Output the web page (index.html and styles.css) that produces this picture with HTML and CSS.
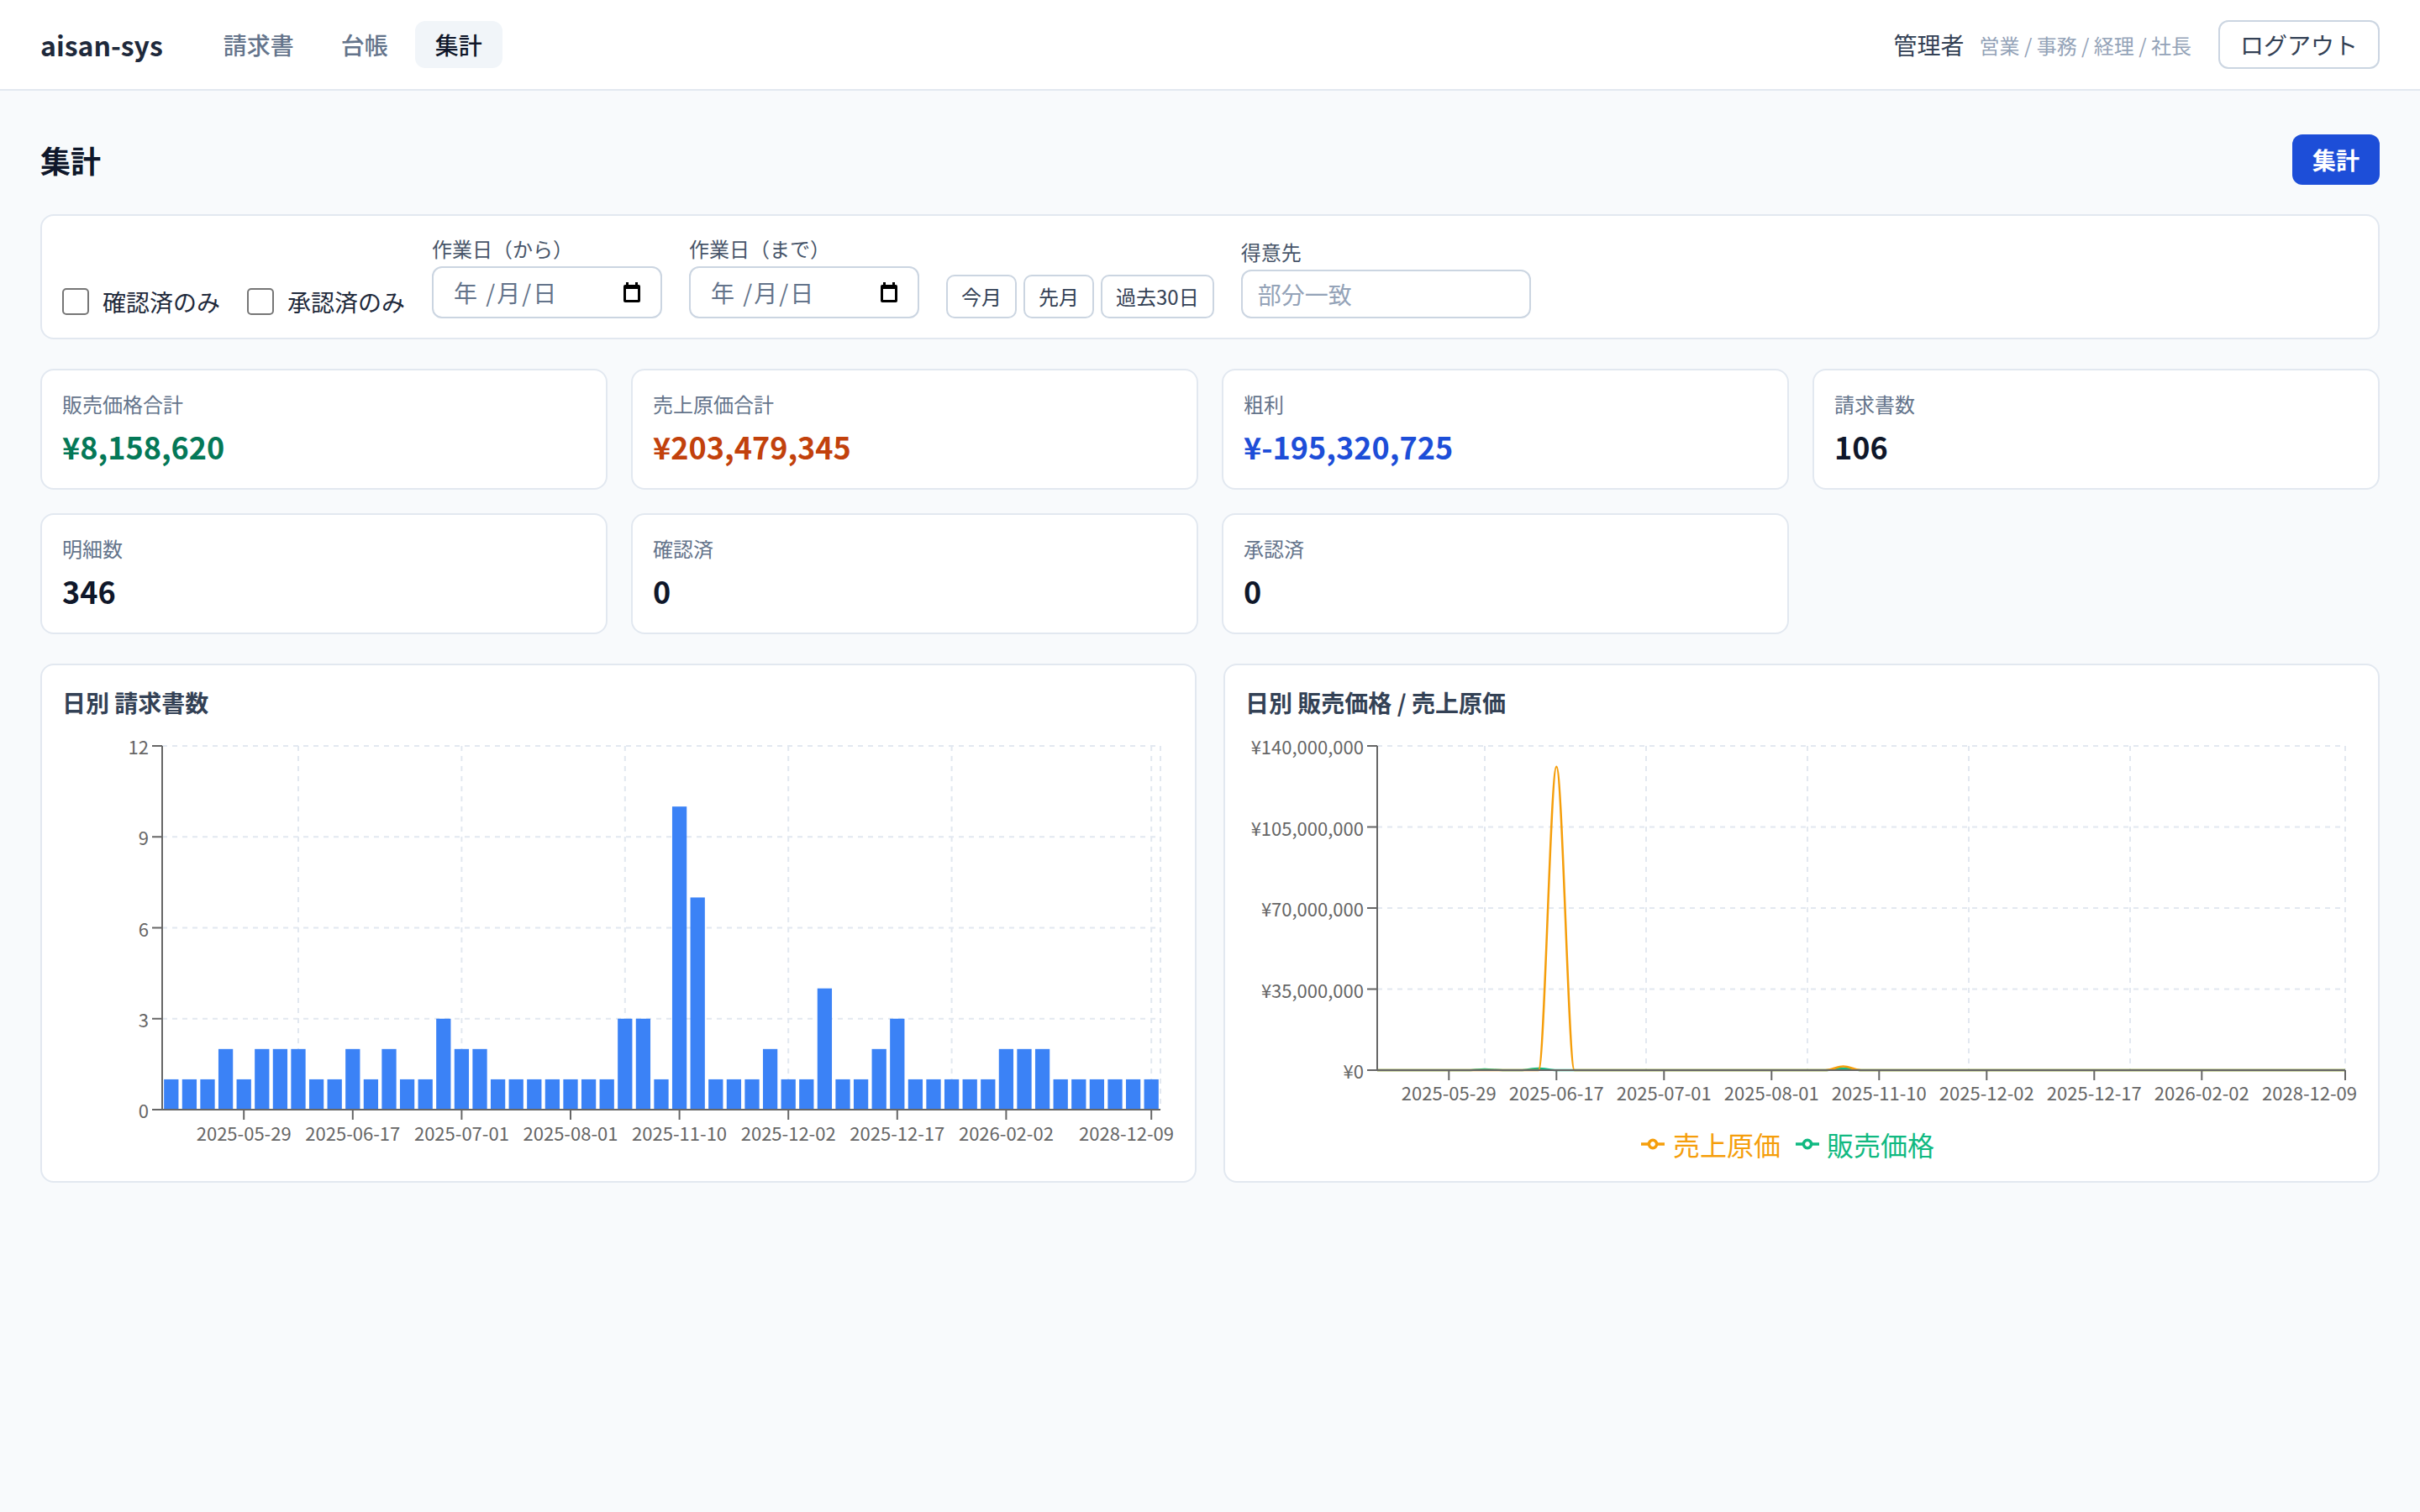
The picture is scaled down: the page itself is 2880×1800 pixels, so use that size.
FILE: index.html
```html
<!DOCTYPE html>
<html lang="ja">
<head>
<meta charset="utf-8">
<title>aisan-sys 集計</title>
<link rel="stylesheet" href="styles.css">
</head>
<body>
<header class="topbar">
  <div class="brand-nav">
    <div class="brand">aisan-sys</div>
    <nav class="nav">
      <a class="nav-item">請求書</a>
      <a class="nav-item">台帳</a>
      <a class="nav-item active">集計</a>
    </nav>
  </div>
  <div class="user">
    <span class="user-name">管理者</span>
    <span class="user-roles">営業 / 事務 / 経理 / 社長</span>
    <button class="btn-outline">ログアウト</button>
  </div>
</header>

<main class="main">
  <div class="page-head">
    <h1 class="page-title">集計</h1>
    <button class="btn-primary">集計</button>
  </div>

  <section class="card filters">
    <label class="check"><input type="checkbox" class="checkbox"><span>確認済のみ</span></label>
    <label class="check"><input type="checkbox" class="checkbox"><span>承認済のみ</span></label>
    <div class="field">
      <div class="field-label">作業日（から）</div>
      <div class="date-input"><span class="date-ph">年 /月/日</span>
        <svg class="cal" viewBox="0 0 20 24" width="20" height="24"><rect x="3" y="0" width="3" height="4" fill="#000"/><rect x="14" y="0" width="3" height="4" fill="#000"/><rect x="0" y="3" width="20" height="21" rx="2" fill="#000"/><rect x="3" y="8" width="14" height="13" fill="#fff"/></svg>
      </div>
    </div>
    <div class="field">
      <div class="field-label">作業日（まで）</div>
      <div class="date-input"><span class="date-ph">年 /月/日</span>
        <svg class="cal" viewBox="0 0 20 24" width="20" height="24"><rect x="3" y="0" width="3" height="4" fill="#000"/><rect x="14" y="0" width="3" height="4" fill="#000"/><rect x="0" y="3" width="20" height="21" rx="2" fill="#000"/><rect x="3" y="8" width="14" height="13" fill="#fff"/></svg>
      </div>
    </div>
    <div class="quick">
      <button class="btn-small">今月</button>
      <button class="btn-small">先月</button>
      <button class="btn-small">過去30日</button>
    </div>
    <div class="field">
      <div class="field-label">得意先</div>
      <input class="text-input" type="text" placeholder="部分一致">
    </div>
  </section>

  <section class="stats">
    <div class="card stat"><div class="stat-label">販売価格合計</div><div class="stat-value green">¥8,158,620</div></div>
    <div class="card stat"><div class="stat-label">売上原価合計</div><div class="stat-value orange">¥203,479,345</div></div>
    <div class="card stat"><div class="stat-label">粗利</div><div class="stat-value blue">¥-195,320,725</div></div>
    <div class="card stat"><div class="stat-label">請求書数</div><div class="stat-value">106</div></div>
    <div class="card stat"><div class="stat-label">明細数</div><div class="stat-value">346</div></div>
    <div class="card stat"><div class="stat-label">確認済</div><div class="stat-value">0</div></div>
    <div class="card stat"><div class="stat-label">承認済</div><div class="stat-value">0</div></div>
  </section>

  <section class="charts">
    <div class="card chart-card">
      <h2 class="chart-title">日別 請求書数</h2>
      <svg class="chart" width="1323" height="516" viewBox="0 0 1323 516">
        <g class="grid">
          <line x1="119" y1="16" x2="1307" y2="16"/>
          <line x1="119" y1="124.25" x2="1307" y2="124.25"/>
          <line x1="119" y1="232.5" x2="1307" y2="232.5"/>
          <line x1="119" y1="340.75" x2="1307" y2="340.75"/>
          <line x1="281" y1="16" x2="281" y2="449"/>
          <line x1="475.4" y1="16" x2="475.4" y2="449"/>
          <line x1="669.8" y1="16" x2="669.8" y2="449"/>
          <line x1="864.2" y1="16" x2="864.2" y2="449"/>
          <line x1="1058.6" y1="16" x2="1058.6" y2="449"/>
          <line x1="1296.2" y1="16" x2="1296.2" y2="449"/>
          <line x1="1307" y1="16" x2="1307" y2="449"/>
        </g>
        <g class="bars">
          <rect x="121.16" y="412.92" width="17.28" height="36.08"/>
          <rect x="142.76" y="412.92" width="17.28" height="36.08"/>
          <rect x="164.36" y="412.92" width="17.28" height="36.08"/>
          <rect x="185.96" y="376.83" width="17.28" height="72.17"/>
          <rect x="207.56" y="412.92" width="17.28" height="36.08"/>
          <rect x="229.16" y="376.83" width="17.28" height="72.17"/>
          <rect x="250.76" y="376.83" width="17.28" height="72.17"/>
          <rect x="272.36" y="376.83" width="17.28" height="72.17"/>
          <rect x="293.96" y="412.92" width="17.28" height="36.08"/>
          <rect x="315.56" y="412.92" width="17.28" height="36.08"/>
          <rect x="337.16" y="376.83" width="17.28" height="72.17"/>
          <rect x="358.76" y="412.92" width="17.28" height="36.08"/>
          <rect x="380.36" y="376.83" width="17.28" height="72.17"/>
          <rect x="401.96" y="412.92" width="17.28" height="36.08"/>
          <rect x="423.56" y="412.92" width="17.28" height="36.08"/>
          <rect x="445.16" y="340.75" width="17.28" height="108.25"/>
          <rect x="466.76" y="376.83" width="17.28" height="72.17"/>
          <rect x="488.36" y="376.83" width="17.28" height="72.17"/>
          <rect x="509.96" y="412.92" width="17.28" height="36.08"/>
          <rect x="531.56" y="412.92" width="17.28" height="36.08"/>
          <rect x="553.16" y="412.92" width="17.28" height="36.08"/>
          <rect x="574.76" y="412.92" width="17.28" height="36.08"/>
          <rect x="596.36" y="412.92" width="17.28" height="36.08"/>
          <rect x="617.96" y="412.92" width="17.28" height="36.08"/>
          <rect x="639.56" y="412.92" width="17.28" height="36.08"/>
          <rect x="661.16" y="340.75" width="17.28" height="108.25"/>
          <rect x="682.76" y="340.75" width="17.28" height="108.25"/>
          <rect x="704.36" y="412.92" width="17.28" height="36.08"/>
          <rect x="725.96" y="88.17" width="17.28" height="360.83"/>
          <rect x="747.56" y="196.42" width="17.28" height="252.58"/>
          <rect x="769.16" y="412.92" width="17.28" height="36.08"/>
          <rect x="790.76" y="412.92" width="17.28" height="36.08"/>
          <rect x="812.36" y="412.92" width="17.28" height="36.08"/>
          <rect x="833.96" y="376.83" width="17.28" height="72.17"/>
          <rect x="855.56" y="412.92" width="17.28" height="36.08"/>
          <rect x="877.16" y="412.92" width="17.28" height="36.08"/>
          <rect x="898.76" y="304.67" width="17.28" height="144.33"/>
          <rect x="920.36" y="412.92" width="17.28" height="36.08"/>
          <rect x="941.96" y="412.92" width="17.28" height="36.08"/>
          <rect x="963.56" y="376.83" width="17.28" height="72.17"/>
          <rect x="985.16" y="340.75" width="17.28" height="108.25"/>
          <rect x="1006.76" y="412.92" width="17.28" height="36.08"/>
          <rect x="1028.36" y="412.92" width="17.28" height="36.08"/>
          <rect x="1049.96" y="412.92" width="17.28" height="36.08"/>
          <rect x="1071.56" y="412.92" width="17.28" height="36.08"/>
          <rect x="1093.16" y="412.92" width="17.28" height="36.08"/>
          <rect x="1114.76" y="376.83" width="17.28" height="72.17"/>
          <rect x="1136.36" y="376.83" width="17.28" height="72.17"/>
          <rect x="1157.96" y="376.83" width="17.28" height="72.17"/>
          <rect x="1179.56" y="412.92" width="17.28" height="36.08"/>
          <rect x="1201.16" y="412.92" width="17.28" height="36.08"/>
          <rect x="1222.76" y="412.92" width="17.28" height="36.08"/>
          <rect x="1244.36" y="412.92" width="17.28" height="36.08"/>
          <rect x="1265.96" y="412.92" width="17.28" height="36.08"/>
          <rect x="1287.56" y="412.92" width="17.28" height="36.08"/>
        </g>
        <g class="axis">
          <line x1="119" y1="16" x2="119" y2="449"/>
          <line x1="119" y1="449" x2="1307" y2="449"/>
          <line x1="107" y1="16" x2="119" y2="16"/>
          <line x1="107" y1="124.25" x2="119" y2="124.25"/>
          <line x1="107" y1="232.5" x2="119" y2="232.5"/>
          <line x1="107" y1="340.75" x2="119" y2="340.75"/>
          <line x1="107" y1="449" x2="119" y2="449"/>
          <line x1="216.2" y1="449" x2="216.2" y2="461"/>
          <line x1="345.8" y1="449" x2="345.8" y2="461"/>
          <line x1="475.4" y1="449" x2="475.4" y2="461"/>
          <line x1="605" y1="449" x2="605" y2="461"/>
          <line x1="734.6" y1="449" x2="734.6" y2="461"/>
          <line x1="864.2" y1="449" x2="864.2" y2="461"/>
          <line x1="993.8" y1="449" x2="993.8" y2="461"/>
          <line x1="1123.4" y1="449" x2="1123.4" y2="461"/>
          <line x1="1296.2" y1="449" x2="1296.2" y2="461"/>
        </g>
        <g class="ylabels">
          <text x="103" y="16">12</text>
          <text x="103" y="124.25">9</text>
          <text x="103" y="232.5">6</text>
          <text x="103" y="340.75">3</text>
          <text x="103" y="449">0</text>
        </g>
        <g class="xlabels">
          <text x="216.2" y="476">2025-05-29</text>
          <text x="345.8" y="476">2025-06-17</text>
          <text x="475.4" y="476">2025-07-01</text>
          <text x="605" y="476">2025-08-01</text>
          <text x="734.6" y="476">2025-11-10</text>
          <text x="864.2" y="476">2025-12-02</text>
          <text x="993.8" y="476">2025-12-17</text>
          <text x="1123.4" y="476">2026-02-02</text>
          <text class="end" x="1323" y="476">2028-12-09</text>
        </g>
      </svg>
    </div>

    <div class="card chart-card">
      <h2 class="chart-title">日別 販売価格 / 売上原価</h2>
      <svg class="chart" width="1323" height="516" viewBox="0 0 1323 516">
        <g class="grid">
          <line x1="157" y1="16" x2="1309" y2="16"/>
          <line x1="157" y1="112.5" x2="1309" y2="112.5"/>
          <line x1="157" y1="209" x2="1309" y2="209"/>
          <line x1="157" y1="305.5" x2="1309" y2="305.5"/>
          <line x1="285" y1="16" x2="285" y2="402"/>
          <line x1="477" y1="16" x2="477" y2="402"/>
          <line x1="669" y1="16" x2="669" y2="402"/>
          <line x1="861" y1="16" x2="861" y2="402"/>
          <line x1="1053" y1="16" x2="1053" y2="402"/>
          <line x1="1309" y1="16" x2="1309" y2="402"/>
        </g>
        <path class="line-sales" d="M157,402 H263.67 C270.8,402 277.9,401 285,401 C292.1,401 299.2,402 306.33,402 H327.67 C334.8,402 341.9,400 349,400 C356.1,400 363.2,402 370.33,402 H690.33 C697.4,402 704.6,400 711.67,400 C718.8,400 725.9,402 733,402 H1309"/>
        <path class="line-cost" d="M157,402 H349 C356.1,402 363.2,40.8 370.33,40.8 C377.4,40.8 384.6,402 391.67,402 H690.33 C697.4,402 704.6,397.5 711.67,397.5 C718.8,397.5 725.9,402 733,402 H1309"/>
        <g class="axis">
          <line x1="157" y1="16" x2="157" y2="402"/>
          <line x1="157" y1="402" x2="1309" y2="402"/>
          <line x1="145" y1="16" x2="157" y2="16"/>
          <line x1="145" y1="112.5" x2="157" y2="112.5"/>
          <line x1="145" y1="209" x2="157" y2="209"/>
          <line x1="145" y1="305.5" x2="157" y2="305.5"/>
          <line x1="145" y1="402" x2="157" y2="402"/>
          <line x1="242.3" y1="402" x2="242.3" y2="414"/>
          <line x1="370.3" y1="402" x2="370.3" y2="414"/>
          <line x1="498.3" y1="402" x2="498.3" y2="414"/>
          <line x1="626.3" y1="402" x2="626.3" y2="414"/>
          <line x1="754.3" y1="402" x2="754.3" y2="414"/>
          <line x1="882.3" y1="402" x2="882.3" y2="414"/>
          <line x1="1010.3" y1="402" x2="1010.3" y2="414"/>
          <line x1="1138.3" y1="402" x2="1138.3" y2="414"/>
          <line x1="1309" y1="402" x2="1309" y2="414"/>
        </g>
        <g class="ylabels">
          <text x="141" y="16">¥140,000,000</text>
          <text x="141" y="112.5">¥105,000,000</text>
          <text x="141" y="209">¥70,000,000</text>
          <text x="141" y="305.5">¥35,000,000</text>
          <text x="141" y="402">¥0</text>
        </g>
        <g class="xlabels">
          <text x="242.3" y="428">2025-05-29</text>
          <text x="370.3" y="428">2025-06-17</text>
          <text x="498.3" y="428">2025-07-01</text>
          <text x="626.3" y="428">2025-08-01</text>
          <text x="754.3" y="428">2025-11-10</text>
          <text x="882.3" y="428">2025-12-02</text>
          <text x="1010.3" y="428">2025-12-17</text>
          <text x="1138.3" y="428">2026-02-02</text>
          <text class="end" x="1323" y="428">2028-12-09</text>
        </g>
        <g class="legend">
          <path class="legend-cost" transform="translate(471,476) scale(0.875)" d="M0,16h10.67A5.33,5.33,0,1,1,21.33,16H32M21.33,16A5.33,5.33,0,1,1,10.67,16"/>
          <text class="legend-text cost" x="509" y="490">売上原価</text>
          <path class="legend-sales" transform="translate(655,476) scale(0.875)" d="M0,16h10.67A5.33,5.33,0,1,1,21.33,16H32M21.33,16A5.33,5.33,0,1,1,10.67,16"/>
          <text class="legend-text sales" x="692" y="490">販売価格</text>
        </g>
      </svg>
    </div>
  </section>
</main>
</body>
</html>
```

FILE: styles.css
```css
* { box-sizing: border-box; }

html, body {
  margin: 0;
  background: #f8fafc;
}

body {
  font-family: "Noto Sans CJK JP", "Noto Sans", sans-serif;
  color: #0f172a;
  min-height: 1800px;
}

button, input {
  font-family: "Noto Sans CJK JP", "Noto Sans", sans-serif;
}

/* ---------- top bar ---------- */
.topbar {
  height: 108px;
  background: #fff;
  border-bottom: 2px solid #e2e8f0;
  display: flex;
  align-items: center;
  justify-content: space-between;
  padding: 0 48px;
}

.brand-nav {
  display: flex;
  align-items: center;
  gap: 48px;
}

.brand {
  font-size: 32px;
  font-weight: 700;
  color: #1e293b;
  line-height: 44px;
}

.nav {
  display: flex;
  gap: 8px;
}

.nav-item {
  font-size: 28px;
  line-height: 40px;
  padding: 8px 24px;
  border-radius: 12px;
  color: #64748b;
  font-weight: 500;
}

.nav-item.active {
  background: #f1f5f9;
  color: #0f172a;
}

.user {
  display: flex;
  align-items: center;
}

.user-name {
  font-size: 28px;
  color: #334155;
}

.user-roles {
  font-size: 24px;
  color: #94a3b8;
  margin-left: 18px;
}

.btn-outline {
  margin-left: 32px;
  background: #fff;
  border: 2px solid #cbd5e1;
  border-radius: 12px;
  font-size: 28px;
  line-height: 40px;
  padding: 7px 24px;
  color: #334155;
}

/* ---------- main ---------- */
.main {
  padding: 52px 48px 48px;
  display: flex;
  flex-direction: column;
  gap: 35px;
}

.page-head {
  display: flex;
  align-items: center;
  justify-content: space-between;
}

.page-title {
  margin: 0;
  font-size: 36px;
  line-height: 48px;
  font-weight: 700;
  color: #0f172a;
}

.btn-primary {
  background: #1d4ed8;
  color: #fff;
  border: none;
  border-radius: 12px;
  font-size: 28px;
  line-height: 40px;
  font-weight: 700;
  padding: 10px 24px;
}

.card {
  background: #fff;
  border: 2px solid #e2e8f0;
  border-radius: 16px;
}

/* ---------- filters ---------- */
.filters {
  display: flex;
  align-items: flex-end;
  gap: 32px;
  padding: 23px 24px;
}

.check {
  display: flex;
  align-items: center;
  gap: 16px;
  height: 40px;
  font-size: 28px;
  color: #1e293b;
}

.checkbox {
  appearance: none;
  -webkit-appearance: none;
  margin: 0;
  width: 32px;
  height: 32px;
  border: 2px solid #767676;
  border-radius: 5px;
  background: #fff;
}

.field {
  display: flex;
  flex-direction: column;
}

.field-label {
  font-size: 24px;
  line-height: 32px;
  color: #475569;
  margin-bottom: 5px;
}

.date-input {
  width: 274px;
  height: 62px;
  border: 2px solid #cbd5e1;
  border-radius: 12px;
  display: flex;
  align-items: center;
  justify-content: space-between;
  padding: 0 24px;
  font-size: 28px;
  color: #64748b;
}

.date-ph {
  letter-spacing: 2px;
}

.cal {
  display: block;
}

.quick {
  display: flex;
  gap: 8px;
}

.btn-small {
  background: #fff;
  border: 2px solid #cbd5e1;
  border-radius: 10px;
  font-size: 24px;
  line-height: 32px;
  padding: 8px 16px;
  color: #334155;
}

.text-input {
  width: 345px;
  height: 58px;
  border: 2px solid #cbd5e1;
  border-radius: 12px;
  padding: 0 18px;
  font-size: 28px;
  color: #0f172a;
  background: #fff;
}

.text-input::placeholder {
  color: #94a3b8;
}

/* ---------- stats ---------- */
.stats {
  display: grid;
  grid-template-columns: repeat(4, 1fr);
  gap: 28px;
}

.stat {
  padding: 24px;
}

.stat-label {
  font-size: 24px;
  line-height: 32px;
  color: #64748b;
}

.stat-value {
  margin-top: 8px;
  font-size: 36px;
  line-height: 52px;
  font-weight: 700;
  color: #0f172a;
}

.stat-value.green { color: #047857; }
.stat-value.orange { color: #c2410c; }
.stat-value.blue { color: #1d4ed8; }

/* ---------- charts ---------- */
.charts {
  display: grid;
  grid-template-columns: 1fr 1fr;
  gap: 32px;
}

.chart-card {
  padding: 24px 24px 18px;
}

.chart-title {
  margin: 0 0 16px;
  font-size: 28px;
  line-height: 40px;
  font-weight: 700;
  color: #334155;
}

.chart {
  display: block;
}

.chart text {
  font-family: "Noto Sans CJK JP", "Noto Sans", sans-serif;
  font-size: 22px;
  fill: #666;
  dominant-baseline: central;
}

.ylabels text { text-anchor: end; }
.xlabels text { text-anchor: middle; }
.xlabels text.end { text-anchor: end; }

.grid line {
  stroke: #e2e8f0;
  stroke-width: 2;
  stroke-dasharray: 6 6;
}

.axis line {
  stroke: #666;
  stroke-width: 2;
}

.bars rect {
  fill: #3b82f6;
}

.line-cost {
  fill: none;
  stroke: #f59e0b;
  stroke-width: 2.5;
}

.line-sales {
  fill: none;
  stroke: #10b981;
  stroke-width: 2.5;
}

.legend-cost {
  fill: none;
  stroke: #f59e0b;
  stroke-width: 4;
}

.legend-sales {
  fill: none;
  stroke: #10b981;
  stroke-width: 4;
}

.chart .legend-text {
  font-size: 32px;
  text-anchor: start;
}

.chart .legend-text.cost { fill: #f59e0b; }
.chart .legend-text.sales { fill: #10b981; }
```
